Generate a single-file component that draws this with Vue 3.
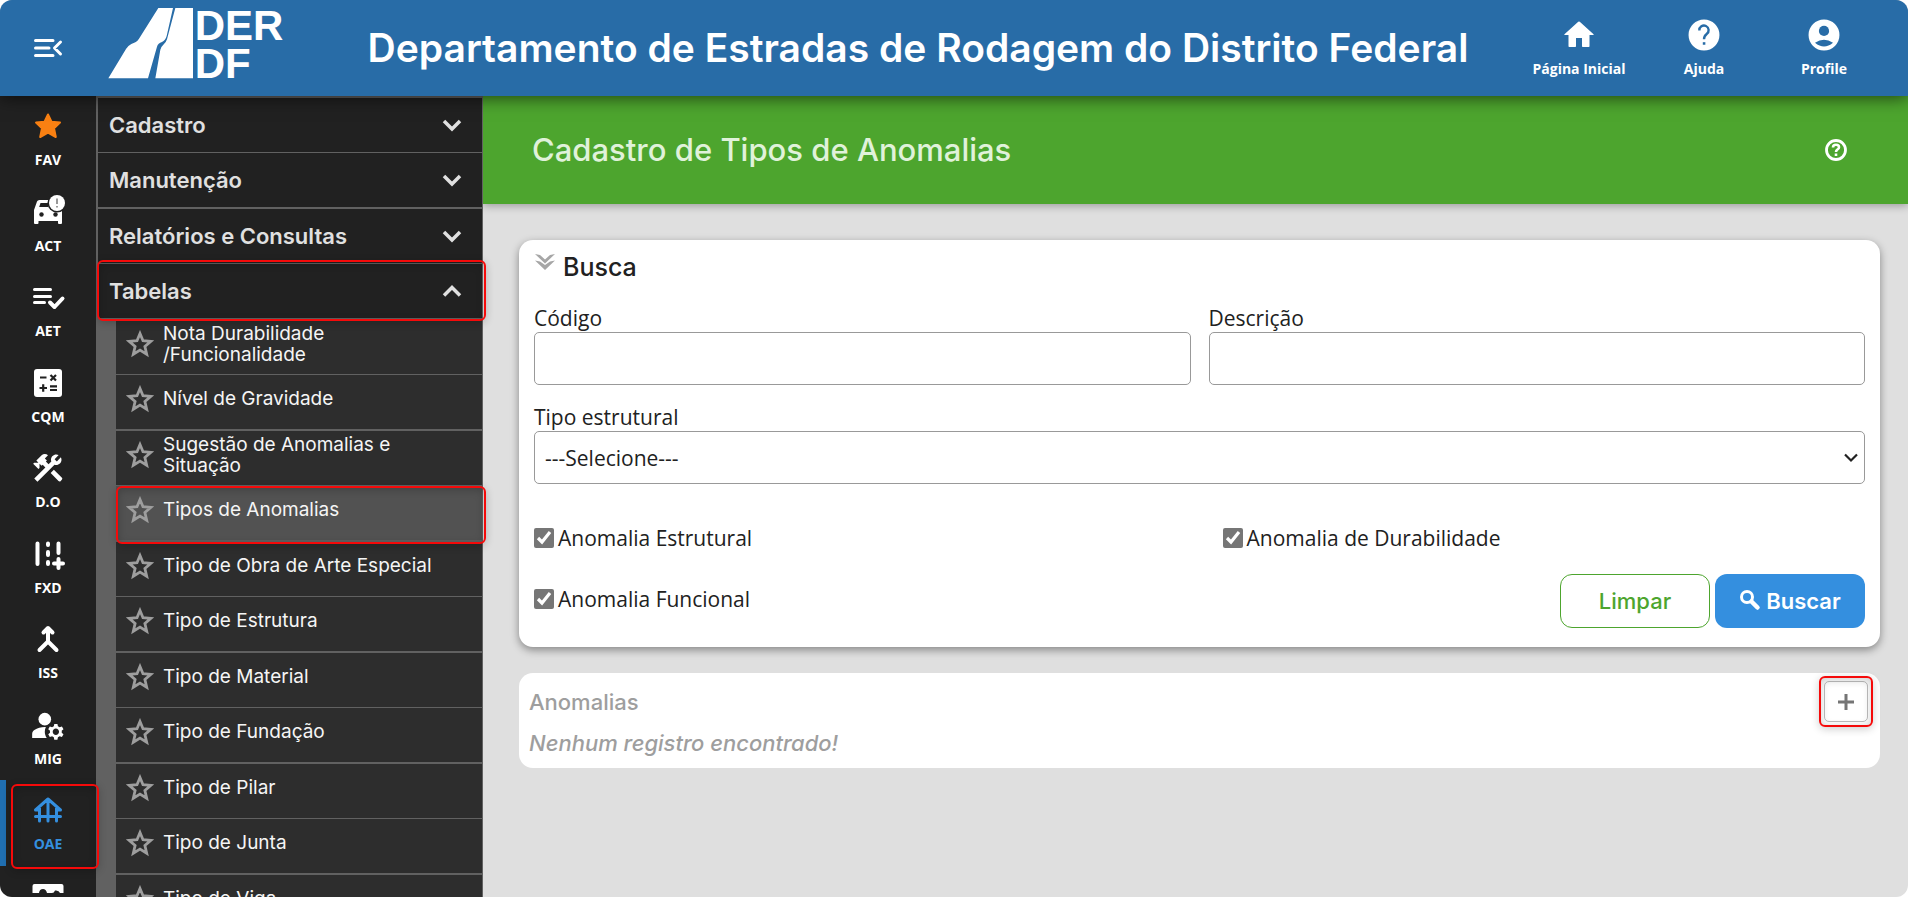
<script setup>
import { ref } from 'vue'

const rail = [
  { label: 'FAV', icon: 'fav' },
  { label: 'ACT', icon: 'act' },
  { label: 'AET', icon: 'aet' },
  { label: 'CQM', icon: 'cqm' },
  { label: 'D.O', icon: 'do' },
  { label: 'FXD', icon: 'fxd' },
  { label: 'ISS', icon: 'iss' },
  { label: 'MIG', icon: 'mig' },
  { label: 'OAE', icon: 'oae', active: true },
  { label: '', icon: 'box' },
]

const groups = [
  { label: 'Cadastro' },
  { label: 'Manutenção' },
  { label: 'Relatórios e Consultas' },
  { label: 'Tabelas', open: true },
]

const tables = [
  'Nota Durabilidade /Funcionalidade',
  'Nível de Gravidade',
  'Sugestão de Anomalias e Situação',
  'Tipos de Anomalias',
  'Tipo de Obra de Arte Especial',
  'Tipo de Estrutura',
  'Tipo de Material',
  'Tipo de Fundação',
  'Tipo de Pilar',
  'Tipo de Junta',
  'Tipo de Viga',
]
const current = 'Tipos de Anomalias'

const codigo = ref('')
const descricao = ref('')
const tipo = ref('')
const estrutural = ref(true)
const durabilidade = ref(true)
const funcional = ref(true)
</script>

<template>
  <div class="app">
    <header class="topbar">
      <button class="toggle" type="button" aria-label="Recolher menu">
        <svg width="36" height="36" viewBox="0 0 36 36" fill="none" stroke="#fff" stroke-width="3" stroke-linecap="round" stroke-linejoin="round">
          <path d="M5.500 10.500H23M5.500 18H19M5.500 25.500H23M30.500 12L24.500 18L30.500 24" />
        </svg>
      </button>
      <svg class="logo" width="177" height="71" viewBox="324 24 531 213" role="img" aria-label="DER DF">
        <g fill="#fff">
          <path d="M475 24H519L500 108Q496 122 486 126Q474 130 471 140L444 235H325L378 147Q384 137 394 132L406 127Q412 124 417 116Z" />
          <path d="M526 24H579V235H466L481 149Q483 140 490 134Q498 128 501 118Z" />
          <text class="logo-text" x="584" y="119">DER</text>
          <text class="logo-text" x="584" y="234">DF</text>
        </g>
      </svg>
      <h1 class="org">Departamento de Estradas de Rodagem do Distrito Federal</h1>
      <nav class="actions">
        <a class="action" href="#">
          <svg width="36" height="36" viewBox="0 0 24 24" fill="currentColor"><path d="M10 19.500v-5.500h4v5.500q0 .5.500.5h4q.5 0 .5-.5V12h2.500q.6 0 .2-.5L12.500 3.200q-.5-.4-1 0L2.300 11.500q-.4.5.2.500H5v7.500q0 .5.500.5h4q.5 0 .5-.5z" /></svg>
          <span>Página Inicial</span>
        </a>
        <a class="action" href="#">
          <svg width="36" height="36" viewBox="0 0 24 24">
            <circle cx="12" cy="12" r="10.300" fill="currentColor" />
            <path d="M8.900 9A3.100 3.100 0 1 1 13.800 11.300C12.600 12.200 12 12.900 12 14.800" fill="none" stroke="#286ca7" stroke-width="1.600" />
            <rect x="11.200" y="16.800" width="1.700" height="1.700" fill="#286ca7" />
          </svg>
          <span>Ajuda</span>
        </a>
        <a class="action" href="#">
          <svg width="36" height="36" viewBox="0 0 24 24">
            <circle cx="12" cy="12" r="10.300" fill="currentColor" />
            <circle cx="12" cy="9.300" r="3.400" fill="#286ca7" />
            <path d="M6 17.200Q12 13.200 18 17.200Q12 22.200 6 17.200Z" fill="#286ca7" />
          </svg>
          <span>Profile</span>
        </a>
      </nav>
    </header>

    <div class="body">
      <nav class="rail">
        <a v-for="r in rail" :key="r.icon" href="#" class="rail-item" :class="{ active: r.active }">
          <svg width="36" height="36" viewBox="0 0 36 36" fill="currentColor">
            <path v-if="r.icon === 'fav'" fill="#f98012" stroke="#f98012" stroke-width="2" stroke-linejoin="round" d="M18 6.500L21.500 13.700L30 14.600L24 20.300L25.800 29L18 24.700L10.200 29L12 20.300L6 14.600L14.500 13.700Z" />
            <template v-else-if="r.icon === 'act'">
              <path d="M9.500 6H18Q17 10 19 13H9.200L8 16.500H23Q28 18.500 32 17V29Q32 30 31 30H29Q28 30 28 29V27H8.500V29Q8.500 30 7.500 30H5Q4 30 4 29V16L7 7.500Q7.500 6 9.500 6Z" />
              <path d="M10.500 9H18V13H9.200Z" fill="#212121" />
              <path d="M9 13H19L28 17L26 23H6V16Z" />
              <circle cx="11.500" cy="20.500" r="2.200" fill="#212121" />
              <circle cx="25.500" cy="20.500" r="2.200" fill="#212121" />
              <circle cx="27" cy="9" r="9.500" fill="#212121" />
              <circle cx="27" cy="9" r="8" />
              <path d="M27 4.500V10M27 12V13.500" stroke="#777" stroke-width="1.500" />
            </template>
            <g v-else-if="r.icon === 'aet'" fill="none" stroke="currentColor" stroke-linecap="round" stroke-linejoin="round">
              <path stroke-width="3" d="M4.500 10.500H20.500M4.500 17.500H20.500M4.500 23.500H14.500" />
              <path stroke-width="4" d="M20 23.500L24.500 28L32.500 19.500" />
            </g>
            <template v-else-if="r.icon === 'cqm'">
              <rect x="4" y="4" width="28" height="28" rx="3" />
              <path fill="none" stroke="#212121" stroke-width="2.200" d="M10 12.500H16.500M20.500 10L26 15.500M26 10L20.500 15.500M9.500 23H17M13.200 19.300V26.700M20 21.300H27M20 25H27" />
            </template>
            <g v-else-if="r.icon === 'do'" transform="scale(1.500)">
              <path d="M13.780 15.300L19 20.700Q19.800 21.300 20.500 20.600L21.200 19.900Q21.900 19.200 21.300 18.500L15.900 13.160Z" />
              <path d="M17.500 10c1.930 0 3.500-1.570 3.500-3.500 0-.58-.16-1.120-.41-1.600l-2.700 2.700-1.490-1.490 2.700-2.700c-.48-.25-1.020-.41-1.600-.41C15.570 3 14 4.570 14 6.500c0 .41.08.8.21 1.160l-1.850 1.850-1.780-1.780.71-.71-1.410-1.410L12 3.490c-1.170-1.170-3.070-1.170-4.240 0L4.220 7.030l1.410 1.410H2.810l-.71.71 3.540 3.540.71-.71V9.150l1.410 1.410.71-.71 1.780 1.780-7.410 7.410 2.120 2.120L16.340 9.790c.36.13.75.21 1.160.21z" />
            </g>
            <path v-else-if="r.icon === 'fxd'" fill="none" stroke="currentColor" stroke-width="4" stroke-linecap="round" d="M7.500 7.500V28M18 7.500V9M18 16V19M18 26V28M28.500 7.500V17M28.500 23V32M24 27.500H33" />
            <path v-else-if="r.icon === 'iss'" fill="none" stroke="currentColor" stroke-width="4" stroke-linecap="round" stroke-linejoin="round" d="M9.500 29L18 20.500L26.500 29M18 20.500V8M13.500 11.500L18 7L22.500 11.500" />
            <g v-else-if="r.icon === 'mig'" transform="translate(-1 -.5) scale(1.580)">
              <circle cx="10" cy="8" r="4" />
              <path d="M10.670 13.020C10.450 13.010 10.230 13 10 13c-2.420 0-4.680.67-6.610 1.820-.88.52-1.390 1.500-1.390 2.530V20h9.260c-.79-1.130-1.260-2.510-1.260-4 0-1.070.25-2.070.67-2.980z" />
              <path d="M20.750 16c0-.22-.03-.42-.06-.63l1.140-1.010-1-1.730-1.450.49c-.32-.27-.68-.48-1.080-.63L18 11h-2l-.3 1.490c-.4.15-.76.36-1.080.63l-1.450-.49-1 1.730 1.140 1.010c-.03.21-.06.41-.06.63s.03.42.06.63l-1.140 1.010 1 1.730 1.450-.49c.32.27.68.48 1.080.63L16 21h2l.3-1.490c.4-.15.76-.36 1.080-.63l1.450.49 1-1.730-1.140-1.010c.03-.21.06-.41.06-.63zM17 18c-1.100 0-2-.9-2-2s.9-2 2-2 2 .9 2 2-.9 2-2 2z" />
            </g>
            <path v-else-if="r.icon === 'oae'" fill="none" stroke="currentColor" stroke-width="3" stroke-linecap="round" stroke-linejoin="round" d="M5.500 18L18 7L30.500 18M5.500 24.500H30.500M5.500 18H9M27 18H30.500M9.500 16V29M18 8V29M26.500 16V29" />
            <path v-else d="M2.500 15V8Q2.500 6 4.500 6H31.500Q33.500 6 33.500 8V15H30Q29 12 25 12.500Q24 15 22 15H17Q16 11 13 11Q9.500 11 9 15Z" />
          </svg>
          <span class="rail-label">{{ r.label }}</span>
          <i v-if="r.active" class="mark mark-oae"></i>
        </a>
      </nav>

      <nav class="menu">
        <button v-for="g in groups" :key="g.label" type="button" class="group" :aria-expanded="!!g.open">
          <span>{{ g.label }}</span>
          <svg width="20" height="20" viewBox="0 0 20 20" fill="none" stroke="currentColor" stroke-width="3.500">
            <path :d="g.open ? 'M2 14.500L10 6.500L18 14.500' : 'M2 6L10 14L18 6'" />
          </svg>
          <i v-if="g.open" class="mark mark-group"></i>
        </button>
        <ul class="sub">
          <li v-for="t in tables" :key="t">
            <a href="#" class="sub-item" :class="{ current: t === current }">
              <svg width="28" height="28" viewBox="0 0 28 28" fill="none" stroke="#9e9e9e" stroke-width="2.800">
                <path d="M14 3.500L17 10.700L24.800 11.400L18.900 16.500L20.700 24.200L14 20.100L7.300 24.200L9.100 16.500L3.200 11.400L11 10.700Z" />
              </svg>
              <span>{{ t }}</span>
              <i v-if="t === current" class="mark mark-sub"></i>
            </a>
          </li>
        </ul>
      </nav>

      <main class="main">
        <div class="banner">
          <h2>Cadastro de Tipos de Anomalias</h2>
          <button type="button" class="help" aria-label="Ajuda da página">
            <svg width="24" height="24" viewBox="0 0 24 24" fill="none" stroke="currentColor">
              <circle cx="12" cy="12" r="9.500" stroke-width="2.800" />
              <path d="M9 9.500Q9 6.800 12 6.800Q15 6.800 15 9.200Q15 10.800 13.300 11.700Q12 12.400 12 14M12 15.500V18" stroke-width="2.600" />
            </svg>
          </button>
        </div>

        <div class="content">
          <form class="card search" @submit.prevent>
            <h3>
              <svg width="22" height="22" viewBox="0 0 22 22" fill="#a6a6a6">
                <path d="M1 2L6 3L11 7.500L16 3L21 2L11 11.500Z" />
                <path d="M1 8.500L6 9.500L11 13L16 9.500L21 8.500L11 18Z" />
              </svg>
              Busca
            </h3>
            <div class="fields">
              <div class="field">
                <label for="codigo">Código</label>
                <input id="codigo" v-model="codigo" type="text" />
              </div>
              <div class="field">
                <label for="descricao">Descrição</label>
                <input id="descricao" v-model="descricao" type="text" />
              </div>
              <div class="field wide">
                <label for="tipo">Tipo estrutural</label>
                <div class="select">
                  <select id="tipo" v-model="tipo">
                    <option value="">---Selecione---</option>
                  </select>
                  <svg width="16" height="12" viewBox="0 0 16 12" fill="none" stroke="#212121" stroke-width="2.200">
                    <path d="M2 2.500L8 8.500L14 2.500" />
                  </svg>
                </div>
              </div>
            </div>
            <div class="checks">
              <label class="check"><input v-model="estrutural" type="checkbox" />Anomalia Estrutural</label>
              <label class="check"><input v-model="durabilidade" type="checkbox" />Anomalia de Durabilidade</label>
            </div>
            <div class="foot">
              <label class="check"><input v-model="funcional" type="checkbox" />Anomalia Funcional</label>
              <div class="buttons">
                <button type="reset" class="btn outline">Limpar</button>
                <button type="submit" class="btn solid">
                  <svg width="22" height="22" viewBox="0 0 22 22" fill="none" stroke="currentColor">
                    <circle cx="8" cy="7" r="5.500" stroke-width="3" />
                    <path d="M12.500 11.500L18.500 17.500" stroke-width="4.500" stroke-linecap="round" />
                  </svg>
                  Buscar
                </button>
              </div>
            </div>
          </form>

          <section class="card results">
            <div class="results-head">
              <h3>Anomalias</h3>
              <button type="button" class="add" aria-label="Adicionar">
                <svg width="16" height="16" viewBox="0 0 16 16" stroke="#757575" stroke-width="3"><path d="M0 8H16M8 0V16" /></svg>
                <i class="mark mark-add"></i>
              </button>
            </div>
            <p>Nenhum registro encontrado!</p>
          </section>
        </div>
      </main>
    </div>
  </div>
</template>

<style>
body {
  background: #fff;
}
</style>

<style scoped>
* {
  box-sizing: border-box;
}
.app {
  --display: Inter, "Open Sans", sans-serif;
  --text: "Open Sans", "Noto Sans", sans-serif;
  display: flex;
  flex-direction: column;
  height: 100vh;
  overflow: hidden;
  border-radius: 12px;
  background: #dfdfdf;
  font-family: var(--text);
  color: #212121;
}
h1, h2, h3, p, ul {
  margin: 0;
  padding: 0;
  font-weight: 500;
}
a {
  color: inherit;
  text-decoration: none;
}
button {
  font-family: var(--display);
  border: 0;
  padding: 0;
  background: none;
  color: inherit;
  cursor: pointer;
}
svg {
  display: block;
  flex: none;
}

.topbar {
  position: relative;
  z-index: 3;
  display: flex;
  align-items: center;
  flex: none;
  height: 96px;
  background: #286ca7;
  color: #fff;
  box-shadow: 0 2px 16px rgba(0, 0, 0, 0.6);
}
.toggle {
  display: grid;
  place-items: center;
  width: 96px;
  height: 96px;
}
.logo {
  margin: 0 12px 10px;
  overflow: visible;
}
.logo-text {
  font: bold 126px "Liberation Sans", Arial, sans-serif;
}
.org {
  flex: 1;
  padding-left: 20px;
  text-align: center;
  font: 600 39px/48px var(--display);
  white-space: nowrap;
}
.actions {
  display: flex;
  padding-right: 24px;
}
.action {
  display: flex;
  flex-direction: column;
  align-items: center;
  gap: 6px;
  width: 120px;
  font-size: 14px;
  line-height: 20px;
  font-weight: 700;
  white-space: nowrap;
}
.action:first-child {
  margin-right: 5px;
}

.body {
  display: flex;
  flex: 1;
  min-height: 0;
}
.rail {
  position: relative;
  z-index: 2;
  flex: none;
  width: 96px;
  background: #212121;
  color: #fff;
}
.rail-item {
  position: relative;
  display: flex;
  flex-direction: column;
  align-items: center;
  gap: 6px;
  height: 86px;
  padding-top: 12px;
  font-weight: 700;
  font-size: 14px;
  line-height: 20px;
}
.rail-item:nth-child(even) {
  height: 85px;
}
.rail-item.active {
  color: #348fdf;
}
.rail-item.active::before {
  content: "";
  position: absolute;
  inset: 0 auto 0 0;
  width: 6px;
  background: #206fb1;
}

.mark {
  position: absolute;
  z-index: 1;
  border: 2px solid #f50a0a;
  border-radius: 6px;
  box-shadow: 0 2px 8px rgba(0, 0, 0, 0.2), inset 0 2px 8px rgba(0, 0, 0, 0.2);
  pointer-events: none;
}
.mark-oae {
  inset: 4px -3px -3px 11px;
}
.mark-group {
  inset: -4px -4px -3px -1px;
}
.mark-sub {
  inset: 0 -4px -4px 0;
}
.mark-add {
  inset: -6px -6px -6px -6px;
}

.menu {
  position: relative;
  z-index: 1;
  flex: none;
  width: 387px;
  padding: 0 1px 0 2px;
  background: #616161;
}
.group {
  position: relative;
  display: flex;
  align-items: center;
  justify-content: space-between;
  width: 100%;
  height: 56px;
  padding: 0 20px 0 11px;
  border-top: 2px solid #616161;
  background: #212121;
  color: #e0e0e0;
  font-size: 22px;
  line-height: 28px;
  font-weight: 600;
}
.group:nth-child(even) {
  height: 55px;
  border-top-width: 1px;
}
.sub {
  padding-left: 18px;
  list-style: none;
}
.sub-item {
  position: relative;
  display: flex;
  align-items: center;
  gap: 9px;
  height: 56px;
  padding: 0 50px 7px 10px;
  border-top: 2px solid #616161;
  background: #2d2d2d;
  color: #f5f5f5;
  font: 400 19px/21px var(--display);
}
li:nth-child(even) .sub-item {
  height: 55px;
  border-top-width: 1px;
}
.sub-item.current {
  background: #525252;
}

.main {
  flex: 1;
  min-width: 0;
}
.banner {
  display: flex;
  align-items: center;
  justify-content: space-between;
  height: 108px;
  padding: 0 60px 0 49px;
  background: #4da52e;
  color: #e0f2da;
  box-shadow: 0 2px 8px rgba(0, 0, 0, 0.3);
}
.banner h2 {
  font: 500 31px/40px var(--display);
}
.help {
  color: #fff;
}
.content {
  padding: 36px 28px 0 36px;
}
.card {
  background: #fff;
  border-radius: 14px;
}
.search {
  padding: 12px 15px 19px;
  box-shadow: 0 3px 8px rgba(0, 0, 0, 0.4);
}
.search h3 {
  display: flex;
  gap: 7px;
  margin-bottom: 22px;
  font: 500 25px/30px var(--display);
}
.fields {
  display: grid;
  grid-template-columns: 1fr 1fr;
  gap: 18px;
}
.wide {
  grid-column: 1 / -1;
}
.field label {
  display: block;
  font-size: 21px;
  line-height: 28px;
  font-weight: 400;
}
.field input,
.field select {
  display: block;
  width: 100%;
  height: 53px;
  padding: 0 10px;
  border: 1px solid #999;
  border-radius: 5px;
  background: #fff;
  color: #212121;
  font: 400 21px/28px var(--text);
}
.select {
  position: relative;
}
.select select {
  appearance: none;
}
.select svg {
  position: absolute;
  top: 21px;
  right: 6px;
  pointer-events: none;
}
.checks {
  display: grid;
  grid-template-columns: 1fr 1fr;
  column-gap: 46px;
  margin: 40px 0 22px;
}
.check {
  display: flex;
  align-items: center;
  gap: 4px;
  font-size: 21px;
  line-height: 28px;
}
.check input {
  width: 20px;
  height: 20px;
  margin: 0;
  accent-color: #767676;
}
.foot {
  display: flex;
  align-items: center;
  justify-content: space-between;
}
.foot .check {
  padding-bottom: 4px;
}
.buttons {
  display: flex;
  gap: 5px;
}
.btn {
  display: flex;
  align-items: center;
  justify-content: center;
  gap: 5px;
  width: 150px;
  height: 54px;
  border-radius: 12px;
  font-size: 22px;
  line-height: 28px;
}
.outline {
  border: 1px solid #4da52e;
  color: #4da52e;
  font-weight: 500;
}
.solid {
  background: #348fdf;
  color: #fff;
  font-weight: 600;
}
.results {
  margin-top: 26px;
  padding: 8px 12px 4px 10px;
  color: #9e9e9e;
}
.results-head {
  display: flex;
  align-items: center;
  justify-content: space-between;
}
.results h3 {
  font: 500 22px/28px var(--display);
}
.results p {
  font: italic 500 22px/42px var(--display);
}
.add {
  position: relative;
  display: grid;
  place-items: center;
  width: 44px;
  height: 41px;
  border: 1px solid #bdbdbd;
  border-radius: 5px;
}
</style>
